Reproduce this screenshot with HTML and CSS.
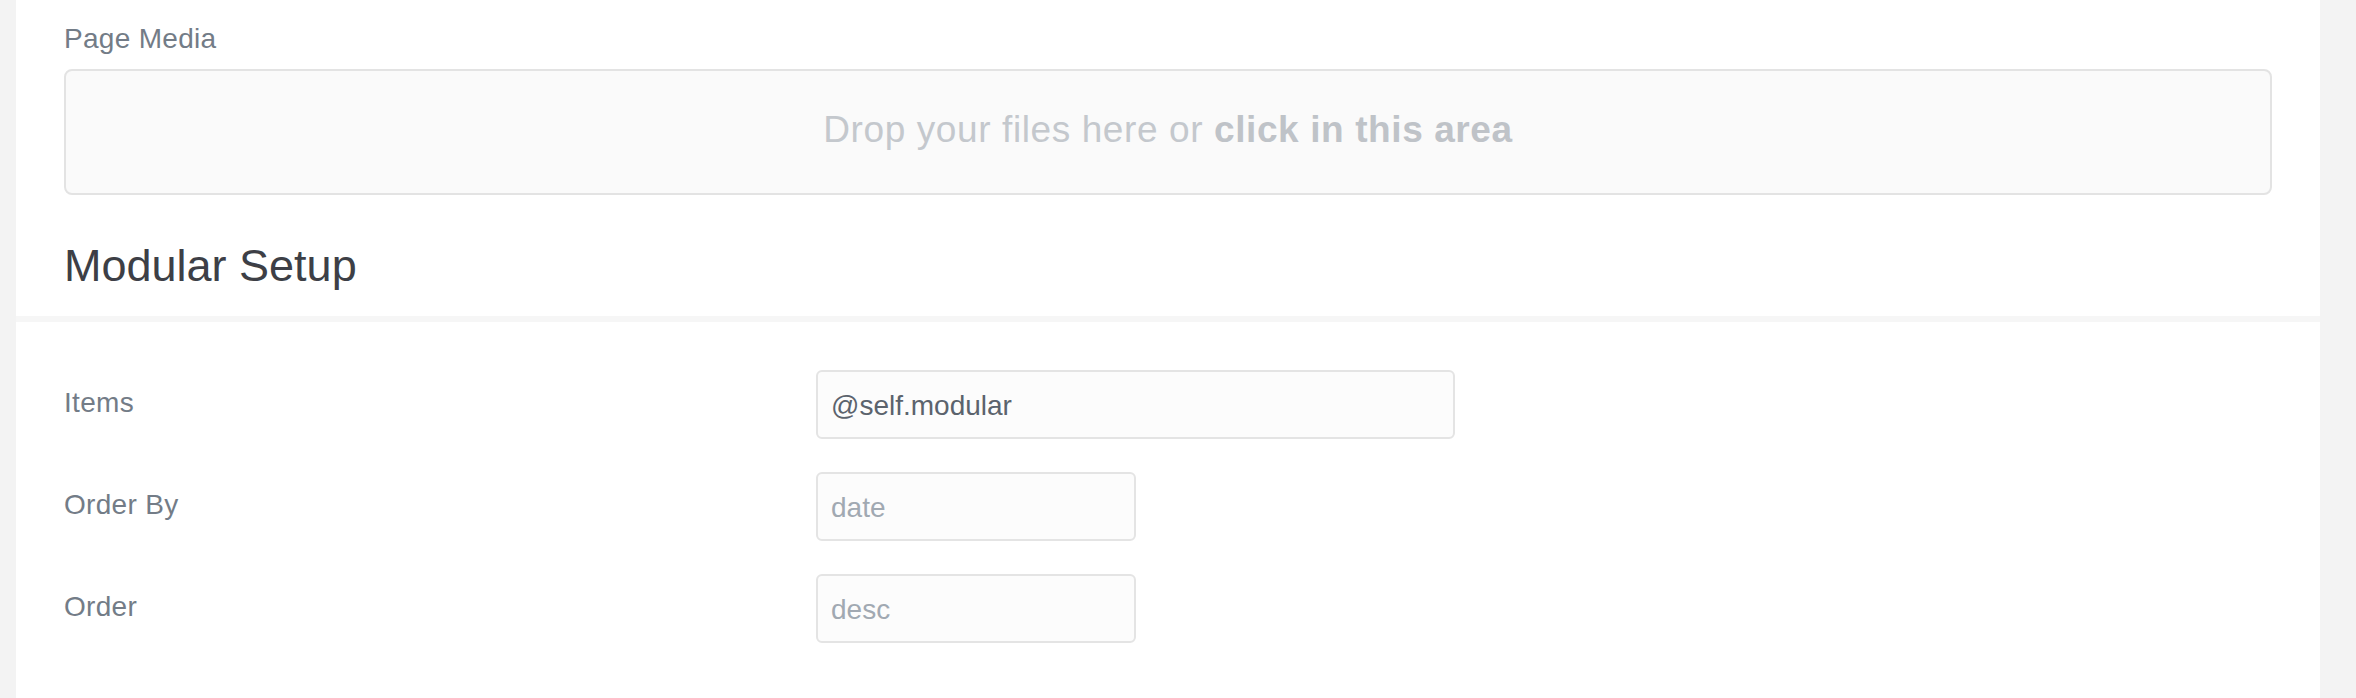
FILE: index.html
```html
<!DOCTYPE html>
<html lang="en">
<head>
<meta charset="utf-8">
<title>Modular Setup</title>
<link rel="stylesheet" href="styles.css">
</head>
<body>
<div class="page">
  <section class="panel panel-top">
    <div class="field-label">Page Media</div>
    <div class="dropzone">
      <span class="dz-text">Drop your files here or <strong>click in this area</strong></span>
    </div>
    <h2 class="section-title">Modular Setup</h2>
  </section>
  <section class="panel panel-bottom">
    <div class="form-row">
      <div class="row-label">Items</div>
      <div class="row-field"><input class="text-input wide" type="text" value="@self.modular"></div>
    </div>
    <div class="form-row">
      <div class="row-label">Order By</div>
      <div class="row-field"><input class="text-input narrow" type="text" placeholder="date"></div>
    </div>
    <div class="form-row">
      <div class="row-label">Order</div>
      <div class="row-field"><input class="text-input narrow" type="text" placeholder="desc"></div>
    </div>
  </section>
</div>
</body>
</html>
```
FILE: styles.css
```css
html, body {
  margin: 0;
  padding: 0;
  height: 100%;
}
body {
  background: #f3f3f3;
  font-family: "Liberation Sans", Arial, Helvetica, sans-serif;
  overflow: hidden;
}
.page {
  padding: 0 36px 0 16px;
  display: flex;
  flex-direction: column;
  min-height: 100%;
  box-sizing: border-box;
}
.panel {
  background: #ffffff;
  padding-left: 48px;
  padding-right: 48px;
}
.panel-top {
  padding-top: 22px;
  padding-bottom: 23px;
}
.field-label {
  font-size: 28px;
  line-height: 34px;
  color: #737c87;
  letter-spacing: 0.3px;
}
.dropzone {
  margin-top: 13px;
  height: 126px;
  box-sizing: border-box;
  border: 2px solid #e3e3e3;
  border-radius: 8px;
  background: #fafafa;
  display: flex;
  align-items: center;
  justify-content: center;
  padding-bottom: 4px;
}
.dz-text {
  font-size: 37px;
  color: #c4c8cd;
  letter-spacing: 0.6px;
}
.dz-text strong {
  font-weight: bold;
  color: #bfc3c8;
}
.section-title {
  margin: 45px 0 0 0;
  font-size: 45px;
  line-height: 52.8px;
  font-weight: normal;
  color: #3d3f46;
}
.panel-bottom {
  flex: 1;
  border-top: 6px solid #f6f6f6;
  padding-top: 48px;
  display: flex;
  flex-direction: column;
  gap: 33px;
}
.form-row {
  display: grid;
  grid-template-columns: 752px 1fr;
  align-items: start;
}
.row-label {
  font-size: 28px;
  line-height: 34px;
  padding-top: 16px;
  color: #737c87;
  letter-spacing: 0.3px;
}
.text-input {
  display: block;
  box-sizing: border-box;
  height: 69px;
  border: 2px solid #e4e4e4;
  border-radius: 6px;
  background: #fcfcfc;
  padding: 4px 13px 0 13px;
  font-family: "Liberation Sans", Arial, Helvetica, sans-serif;
  font-size: 28px;
  color: #5b636d;
  outline: none;
}
.text-input::placeholder {
  color: #a1a9b2;
}
.text-input.wide {
  width: 639px;
}
.text-input.narrow {
  width: 320px;
}
```
